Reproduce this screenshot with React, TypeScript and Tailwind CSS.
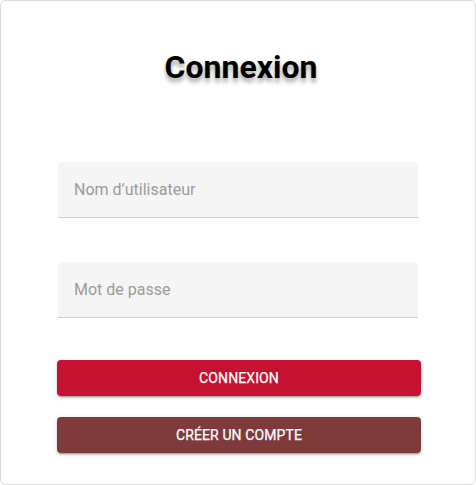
import React from 'react';

const App: React.FC = () => {
  return (
    <div className="w-[476px] h-[485px] bg-white" style={{ fontFamily: 'Roboto, "Liberation Sans", sans-serif' }}>
      <div className="w-[476px] h-[485px] border border-[#dadada] rounded-md flex flex-col items-center">
        {/* Title */}
        <h1 className="mt-[45px] ml-[6px] text-[32px] leading-[42px] font-bold text-black [text-shadow:0_4px_4px_rgba(0,0,0,0.35)]">
          Connexion
        </h1>

        {/* Fields */}
        <div className="mt-[74px] flex flex-col gap-[44px]">
          <input
            type="text"
            placeholder="Nom d’utilisateur"
            className="w-[360px] h-[56px] px-4 bg-[#f5f5f5] rounded-t border-b border-[#cfcfcf] text-base text-[#333] placeholder:text-[#9a9a9a] outline-none"
          />
          <input
            type="password"
            placeholder="Mot de passe"
            className="w-[360px] h-[56px] px-4 bg-[#f5f5f5] rounded-t border-b border-[#cfcfcf] text-base text-[#333] placeholder:text-[#9a9a9a] outline-none"
          />
        </div>

        {/* Buttons */}
        <div className="mt-[42px] flex flex-col gap-[21px] ml-[2px]">
          <button className="w-[364px] h-[36px] rounded bg-[#c41230] text-white text-sm font-normal uppercase tracking-[0.1px] [-webkit-text-stroke:0.25px_white] shadow-[0_3px_1px_-2px_rgba(0,0,0,0.2),0_2px_2px_0_rgba(0,0,0,0.14),0_1px_5px_0_rgba(0,0,0,0.12)]">
            Connexion
          </button>
          <button className="w-[364px] h-[36px] rounded bg-[#7f3b3c] text-white text-sm font-normal uppercase tracking-[0.1px] [-webkit-text-stroke:0.25px_white] shadow-[0_3px_1px_-2px_rgba(0,0,0,0.2),0_2px_2px_0_rgba(0,0,0,0.14),0_1px_5px_0_rgba(0,0,0,0.12)]">
            Créer un compte
          </button>
        </div>
      </div>
    </div>
  );
};

export default App;
